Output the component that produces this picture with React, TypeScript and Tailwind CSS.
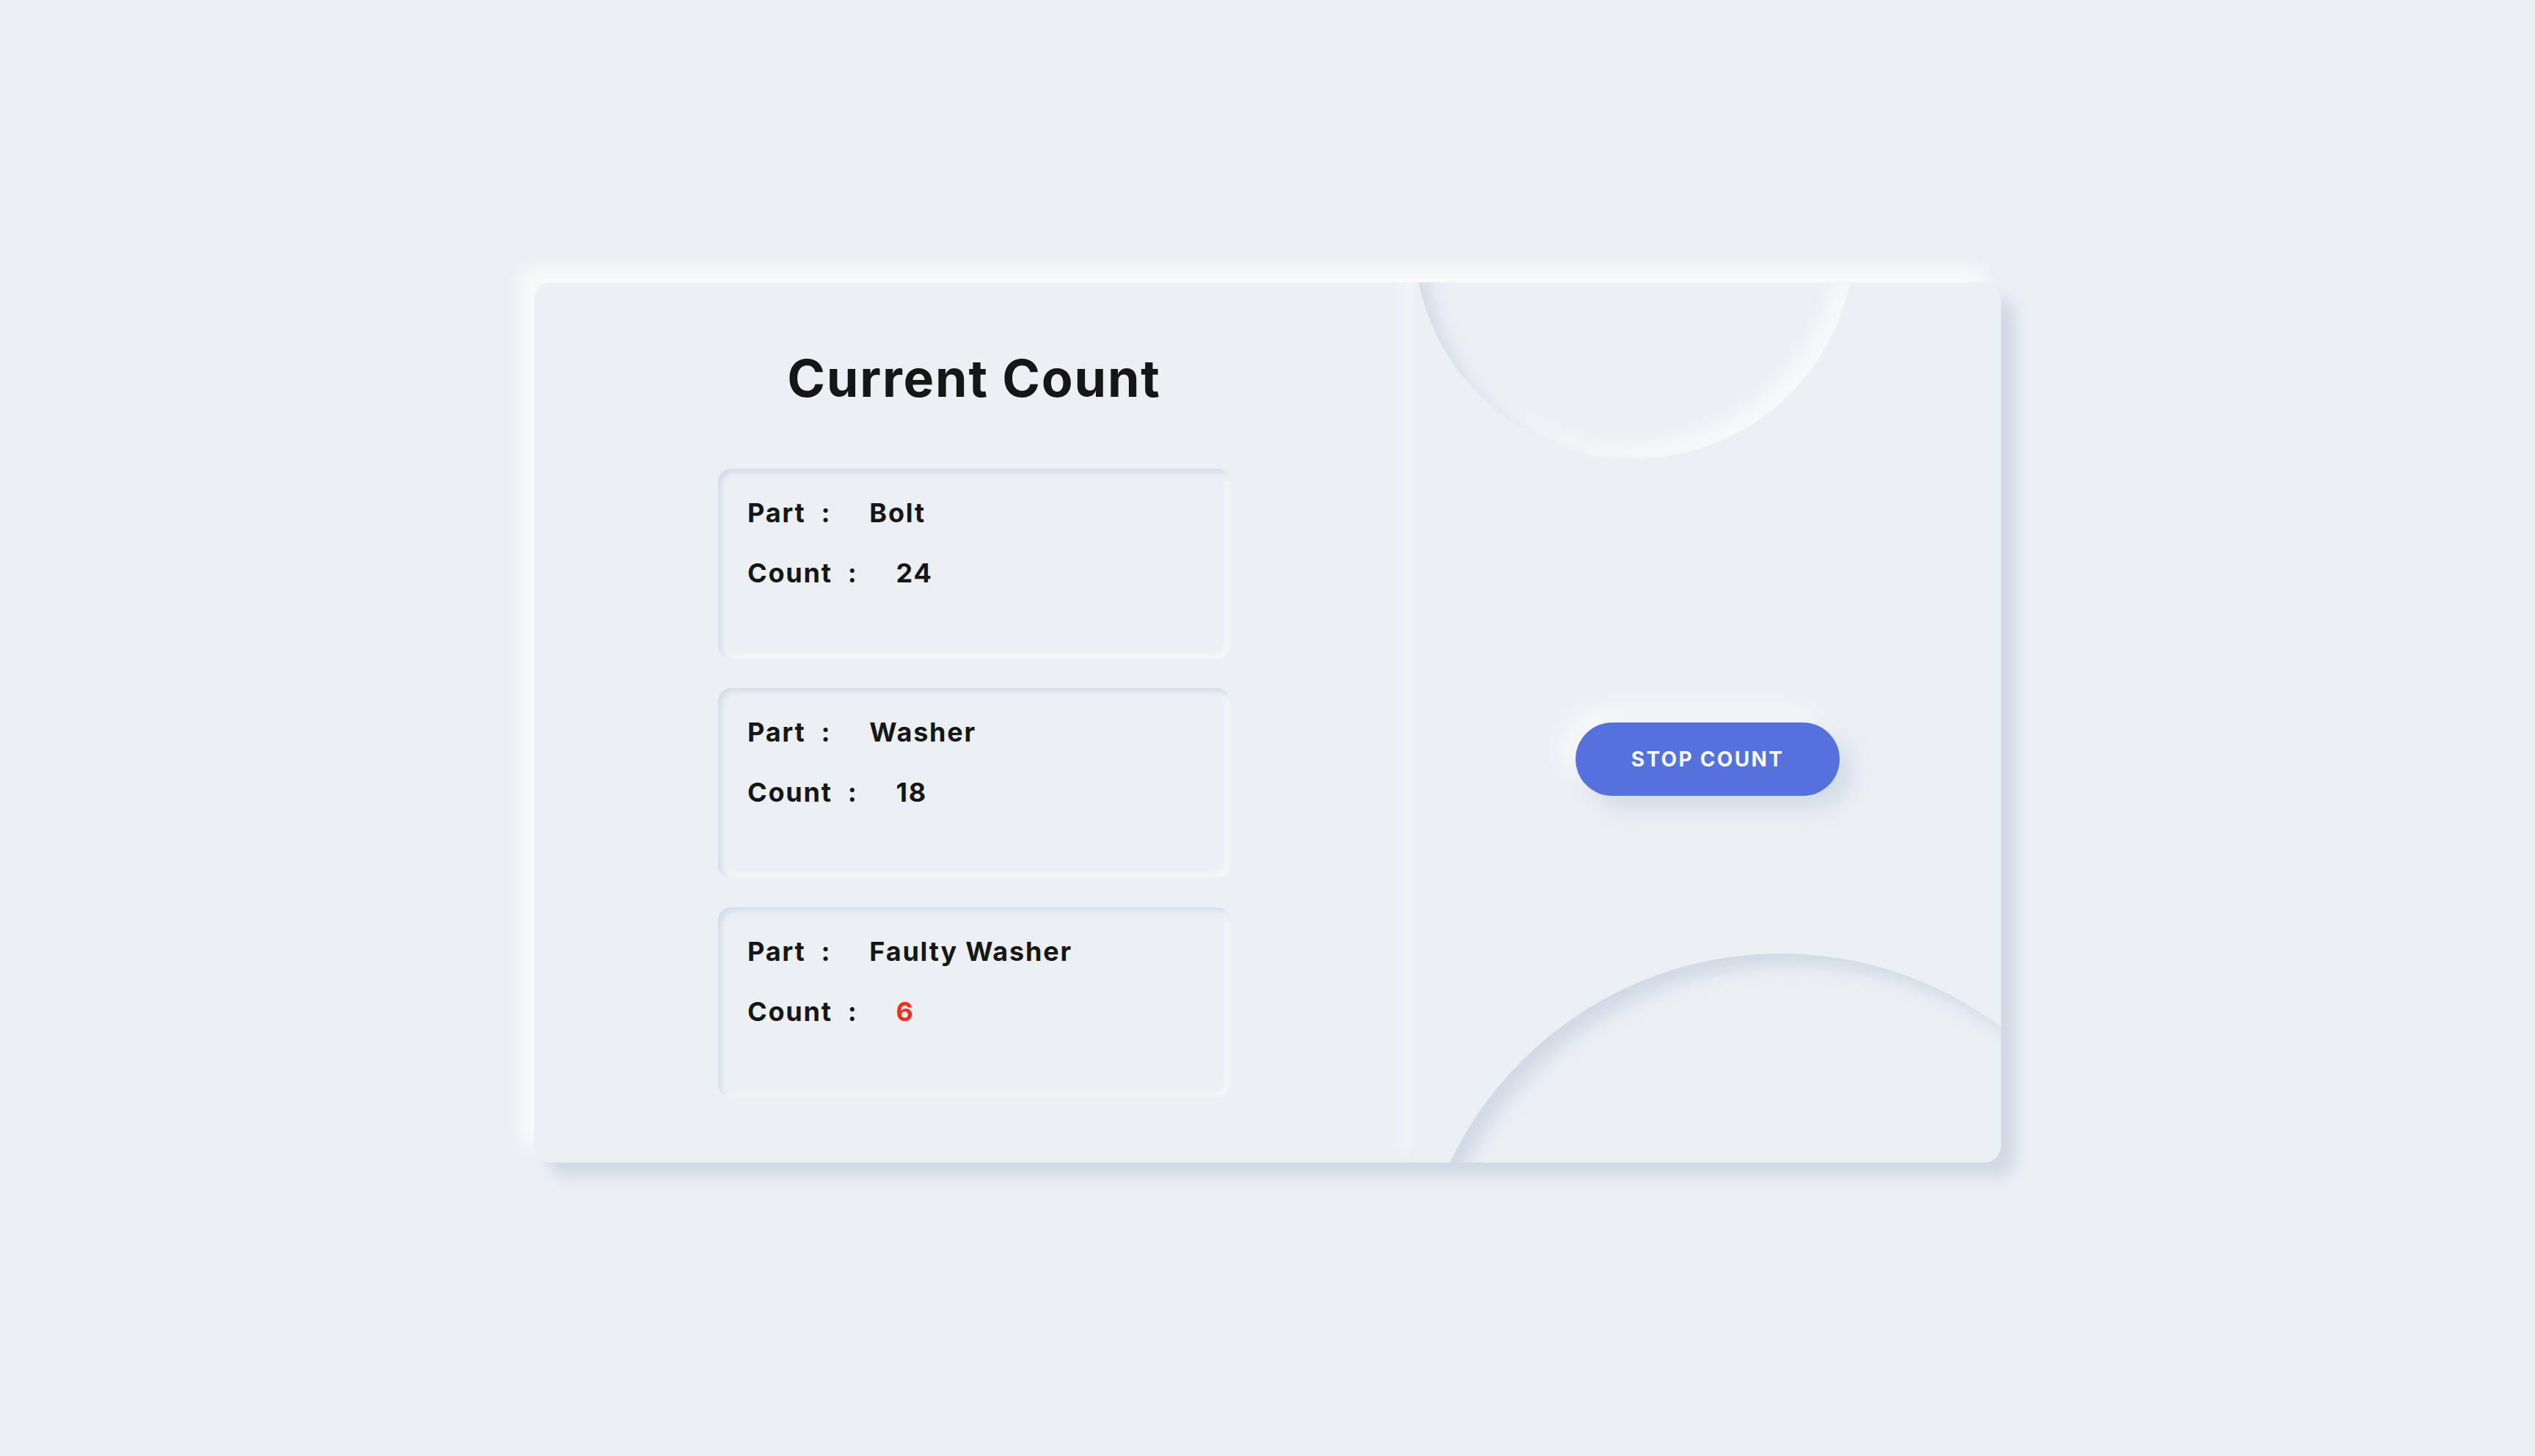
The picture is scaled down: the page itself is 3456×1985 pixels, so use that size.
import React from "react";

const items = [
  { part: "Bolt", count: "24", red: false },
  { part: "Washer", count: "18", red: false },
  { part: "Faulty Washer", count: "6", red: true },
];

function CountBox({ part, count, red }: { part: string; count: string; red: boolean }) {
  return (
    <div className="w-[698px] h-[259px] rounded-[18px] bg-[#ecf0f3] shadow-[inset_4px_4px_8px_#d1d9e6,inset_-4px_-4px_8px_#f9f9f9] pt-[42px] pl-[40px] flex flex-col gap-[46px] text-[36px] leading-none font-bold tracking-[1.8px] text-[#161616]">
      <div className="flex">
        <span>Part</span>
        <span className="ml-[21px]">:</span>
        <span className="ml-[52px]">{part}</span>
      </div>
      <div className="flex">
        <span>Count</span>
        <span className="ml-[21px]">:</span>
        <span className={red ? "ml-[52px] text-[#e8321f]" : "ml-[52px]"}>{count}</span>
      </div>
    </div>
  );
}

export default function App() {
  return (
    <div className="min-h-screen w-full bg-[#ecf0f3] flex justify-center pt-[385px] pb-[400px] font-['Inter','Liberation_Sans',sans-serif]">
      <div className="flex w-[2000px] h-[1200px] shrink-0 rounded-[24px] bg-[#ecf0f3] overflow-hidden shadow-[20px_20px_20px_#d1d9e6,-20px_-20px_20px_#f9f9f9]">
        <div className="w-[1200px] h-full flex flex-col items-center pt-[96px]">
          <h1 className="text-[70px] leading-none font-bold tracking-[1.8px] text-[#161616]">Current Count</h1>
          <div className="mt-[88px] flex flex-col gap-[40px]">
            {items.map((it) => (
              <CountBox key={it.part} {...it} />
            ))}
          </div>
        </div>
        <div className="relative w-[800px] h-full overflow-hidden bg-[#ecf0f3] shadow-[8px_8px_20px_#d1d9e6,-8px_-8px_20px_#f9f9f9] flex items-center justify-center">
          <div className="absolute left-0 top-[-360px] w-[600px] h-[600px] rounded-full bg-[#ecf0f3] shadow-[inset_16px_16px_24px_#d1d9e6,inset_-16px_-16px_24px_#f9f9f9]" />
          <div className="absolute left-0 top-[915px] w-[1000px] h-[1000px] rounded-full bg-[#ecf0f3] shadow-[inset_16px_16px_24px_#d1d9e6,inset_-16px_-16px_24px_#f9f9f9]" />
          <button className="relative z-10 mt-[100px] w-[360px] h-[100px] rounded-full bg-[#5471dc] text-[#f9f9f9] text-[28px] font-bold tracking-[2.3px] shadow-[16px_16px_32px_#d1d9e6,-16px_-16px_32px_#f9f9f9]">
            STOP COUNT
          </button>
        </div>
      </div>
    </div>
  );
}
